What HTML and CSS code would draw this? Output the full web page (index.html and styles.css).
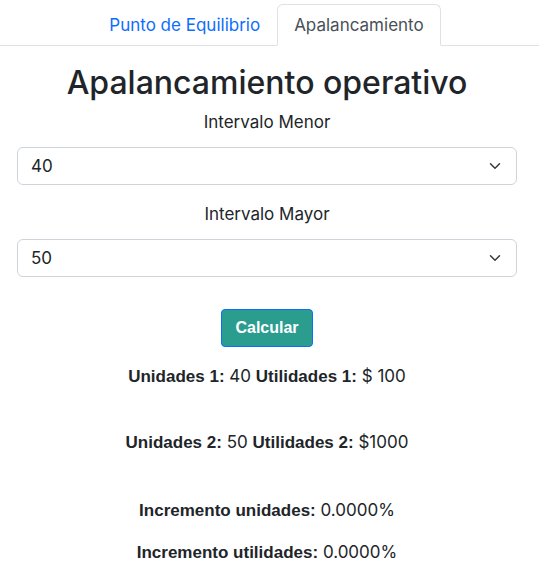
FILE: index.html
```html
<!DOCTYPE html>
<html lang="es">
<head>
<meta charset="utf-8">
<link rel="stylesheet" href="styles.css">
</head>
<body>
<ul class="tabs">
  <li><a class="tab" href="#">Punto de Equilibrio</a></li>
  <li><a class="tab active" href="#">Apalancamiento</a></li>
</ul>
<main class="content">
  <h1 class="title">Apalancamiento operativo</h1>
  <label class="label">Intervalo Menor</label>
  <div class="select"><span>40</span>
    <svg class="chev" viewBox="0 0 16 16"><path d="M2 5l6 6 6-6" fill="none" stroke="#343a40" stroke-width="2" stroke-linecap="round" stroke-linejoin="round"/></svg>
  </div>
  <label class="label">Intervalo Mayor</label>
  <div class="select"><span>50</span>
    <svg class="chev" viewBox="0 0 16 16"><path d="M2 5l6 6 6-6" fill="none" stroke="#343a40" stroke-width="2" stroke-linecap="round" stroke-linejoin="round"/></svg>
  </div>
  <button class="btn">Calcular</button>
  <p class="res r1"><b>Unidades 1:</b> 40 <b>Utilidades 1:</b> $ 100</p>
  <p class="res r2"><b>Unidades 2:</b> 50 <b>Utilidades 2:</b> $1000</p>
  <p class="res r3"><b>Incremento unidades:</b> 0.0000%</p>
  <p class="res r4"><b>Incremento utilidades:</b> 0.0000%</p>
</main>
</body>
</html>
```
FILE: styles.css
```css
* { box-sizing: border-box; }
body {
  margin: 0;
  font-family: Inter, "Liberation Sans", sans-serif;
  font-size: 17px;
  line-height: 24px;
  color: #212529;
  background: #fff;
}
.tabs {
  list-style: none;
  margin: 4px 0 0;
  padding: 0 6px 0 0;
  display: flex;
  justify-content: center;
  border-bottom: 1px solid #dee2e6;
}
.tab {
  display: block;
  padding: 8px 16px;
  margin-bottom: -1px;
  border: 1px solid transparent;
  border-radius: 6px 6px 0 0;
  color: #0d6efd;
  text-decoration: none;
}
.tab.active {
  color: #495057;
  border-color: #dee2e6 #dee2e6 #fff;
  background: #fff;
}
.content {
  display: flex;
  flex-direction: column;
  align-items: center;
  padding: 0 22px 0 17px;
}
.title {
  margin: 17px 0 7px;
  font-size: 32px;
  line-height: 40px;
  font-weight: 500;
}
.label {
  display: block;
  margin-bottom: 13px;
}
.select {
  align-self: stretch;
  height: 38px;
  border: 1px solid #ced4da;
  border-radius: 6px;
  display: flex;
  align-items: center;
  justify-content: space-between;
  padding: 0 15px 0 13px;
  margin-bottom: 17px;
}
.chev { width: 12px; height: 12px; }
.btn {
  margin-top: 15px;
  width: 92px;
  height: 38px;
  background: #2a9d8f;
  border: 1px solid #0d6efd;
  border-radius: 4px;
  color: #fff;
  font-family: "Liberation Sans", Arial, sans-serif;
  font-weight: 700;
  font-size: 16px;
}
.res { margin: 0; text-align: center; }
.res b { font-family: "Liberation Sans", Arial, sans-serif; font-weight: 700; }
.r1 { margin-top: 17px; }
.r2 { margin-top: 41px; }
.r3 { margin-top: 43px; }
.r4 { margin-top: 17px; }
```
